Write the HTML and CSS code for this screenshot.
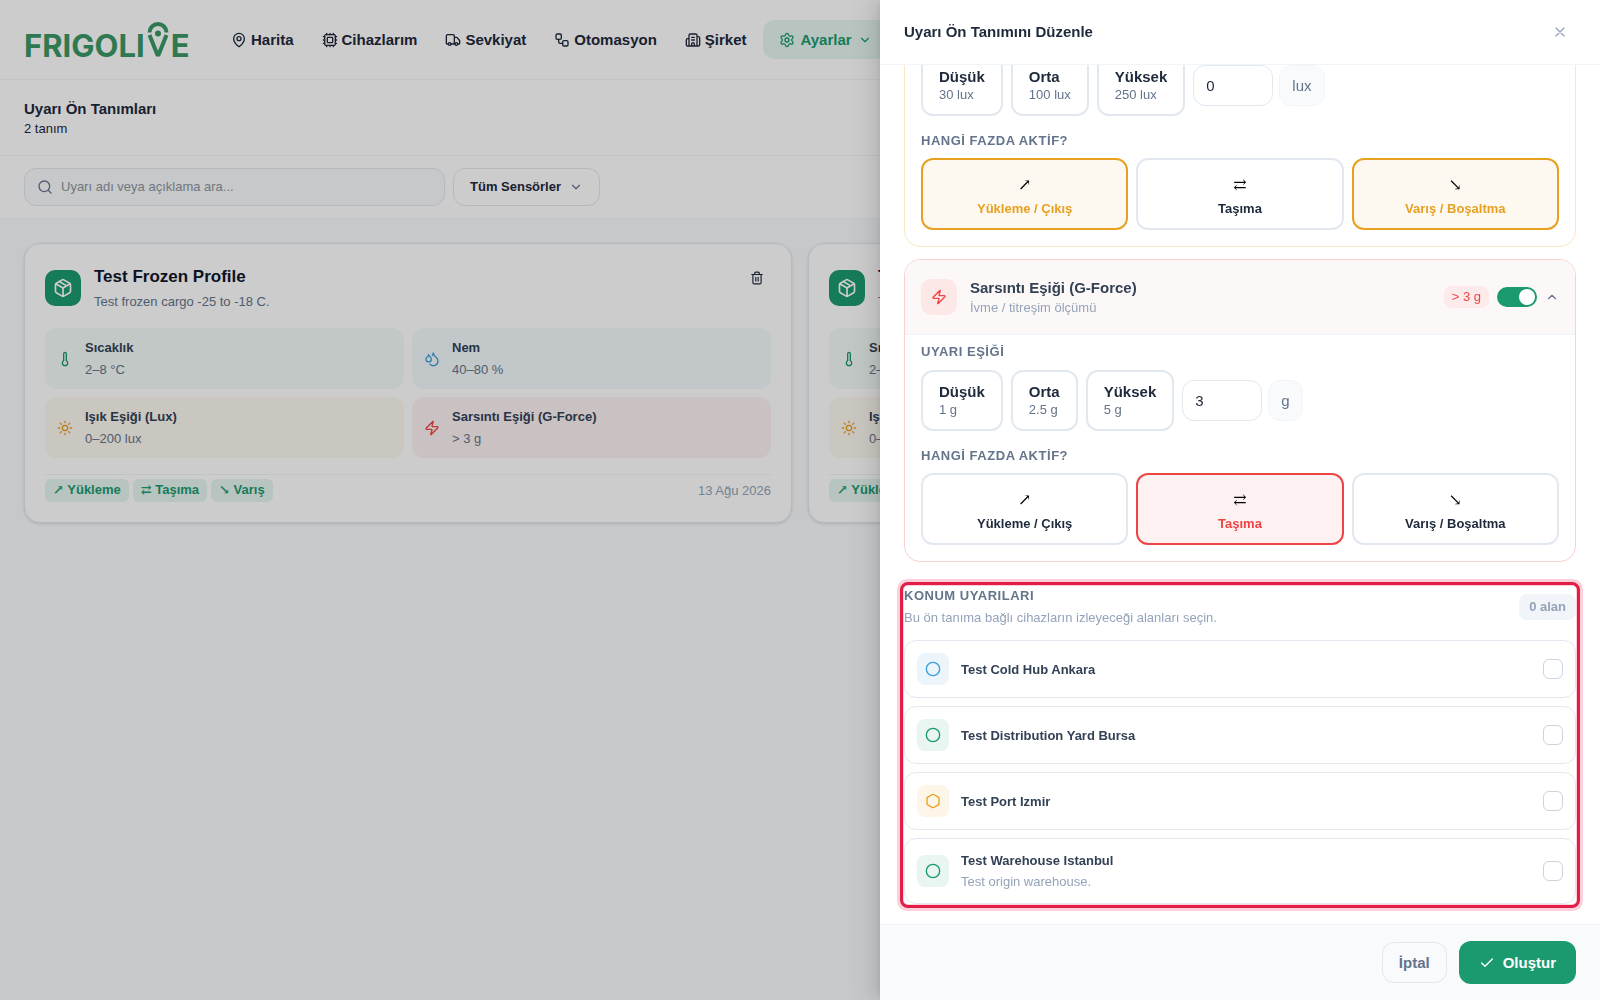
FILE: index.html
```html
<!DOCTYPE html>
<html lang="tr">
<head>
<meta charset="utf-8">
<meta name="viewport" content="width=device-width, initial-scale=1">
<title>Uyarı Ön Tanımları</title>
<link rel="stylesheet" href="styles.css">
</head>
<body>
<svg class="sprite" aria-hidden="true">
  <symbol id="pin" viewBox="0 0 24 24"><path d="M20 10c0 5-5.500 10.200-7.400 11.800a1 1 0 0 1-1.200 0C9.500 20.200 4 15 4 10a8 8 0 0 1 16 0"/><circle cx="12" cy="10" r="3"/></symbol>
  <symbol id="cpu" viewBox="0 0 24 24"><rect x="4" y="4" width="16" height="16" rx="2"/><rect x="8" y="8" width="8" height="8" rx="1"/><path d="M12 20v2M12 2v2M17 20v2M17 2v2M2 12h2M2 17h2M2 7h2M20 12h2M20 17h2M20 7h2M7 20v2M7 2v2"/></symbol>
  <symbol id="truck" viewBox="0 0 24 24"><path d="M14 18V6a2 2 0 0 0-2-2H4a2 2 0 0 0-2 2v11a1 1 0 0 0 1 1h2M15 18H9M19 18h2a1 1 0 0 0 1-1v-3.650a1 1 0 0 0-.22-.624l-3.480-4.350A1 1 0 0 0 17.520 8H14"/><circle cx="17" cy="18" r="2"/><circle cx="7" cy="18" r="2"/></symbol>
  <symbol id="flow" viewBox="0 0 24 24"><rect x="3" y="3" width="8" height="8" rx="2"/><path d="M7 11v4a2 2 0 0 0 2 2h4"/><rect x="13" y="13" width="8" height="8" rx="2"/></symbol>
  <symbol id="building" viewBox="0 0 24 24"><path d="M10 12h4M10 8h4M14 21v-3a2 2 0 0 0-4 0v3M6 10H4a2 2 0 0 0-2 2v7a2 2 0 0 0 2 2h16a2 2 0 0 0 2-2V9a2 2 0 0 0-2-2h-2M6 21V5a2 2 0 0 1 2-2h8a2 2 0 0 1 2 2v16"/></symbol>
  <symbol id="gear" viewBox="0 0 24 24"><path d="M9.671 4.136a2.340 2.340 0 0 1 4.659 0 2.340 2.340 0 0 0 3.319 1.915 2.340 2.340 0 0 1 2.330 4.033 2.340 2.340 0 0 0 0 3.831 2.340 2.340 0 0 1-2.330 4.033 2.340 2.340 0 0 0-3.319 1.915 2.340 2.340 0 0 1-4.659 0 2.340 2.340 0 0 0-3.320-1.915 2.340 2.340 0 0 1-2.330-4.033 2.340 2.340 0 0 0 0-3.831A2.340 2.340 0 0 1 6.350 6.051a2.340 2.340 0 0 0 3.319-1.915"/><circle cx="12" cy="12" r="3"/></symbol>
  <symbol id="down" viewBox="0 0 24 24"><path d="m6 9 6 6 6-6"/></symbol>
  <symbol id="up" viewBox="0 0 24 24"><path d="m18 15-6-6-6 6"/></symbol>
  <symbol id="search" viewBox="0 0 24 24"><circle cx="11" cy="11" r="8"/><path d="m21 21-4.340-4.340"/></symbol>
  <symbol id="box" viewBox="0 0 24 24"><path d="M11 21.730a2 2 0 0 0 2 0l7-4A2 2 0 0 0 21 16V8a2 2 0 0 0-1-1.730l-7-4a2 2 0 0 0-2 0l-7 4A2 2 0 0 0 3 8v8a2 2 0 0 0 1 1.730zM12 22V12"/><path d="M3.290 7 12 12l8.710-5M7.500 4.270l9 5.150"/></symbol>
  <symbol id="trash" viewBox="0 0 24 24"><path d="M3 6h18M19 6v14a2 2 0 0 1-2 2H7a2 2 0 0 1-2-2V6M8 6V4a2 2 0 0 1 2-2h4a2 2 0 0 1 2 2v2M10 11v6M14 11v6"/></symbol>
  <symbol id="thermo" viewBox="0 0 24 24"><path d="M14 4v10.540a4 4 0 1 1-4 0V4a2 2 0 0 1 4 0"/></symbol>
  <symbol id="drops" viewBox="0 0 24 24"><path d="M7 16.300c2.200 0 4-1.830 4-4.050 0-1.160-.57-2.260-1.710-3.190S7.290 6.750 7 5.300c-.29 1.450-1.140 2.840-2.290 3.760S3 11.100 3 12.250c0 2.220 1.800 4.050 4 4.050z"/><path d="M12.560 6.600A10.970 10.970 0 0 0 14 3.020c.5 2.500 2 4.900 4 6.500s3 3.500 3 5.500a6.980 6.980 0 0 1-11.910 4.970"/></symbol>
  <symbol id="sun" viewBox="0 0 24 24"><circle cx="12" cy="12" r="4"/><path d="M12 2v2M12 20v2M4.930 4.930l1.410 1.410M17.660 17.660l1.410 1.410M2 12h2M20 12h2M6.340 17.660l-1.410 1.410M19.070 4.930l-1.410 1.410"/></symbol>
  <symbol id="zap" viewBox="0 0 24 24"><path d="M4 14a1 1 0 0 1-.78-1.630l9.900-10.200a.5.5 0 0 1 .86.460l-1.920 6.020A1 1 0 0 0 13 10h7a1 1 0 0 1 .78 1.630l-9.900 10.200a.5.5 0 0 1-.86-.46l1.920-6.020A1 1 0 0 0 11 14z"/></symbol>
  <symbol id="close" viewBox="0 0 24 24"><path d="M18 6 6 18M6 6l12 12"/></symbol>
  <symbol id="circle" viewBox="0 0 24 24"><circle cx="12" cy="12" r="10"/></symbol>
  <symbol id="hexagon" viewBox="0 0 24 24"><path d="M21 16V8a2 2 0 0 0-1-1.730l-7-4a2 2 0 0 0-2 0l-7 4A2 2 0 0 0 3 8v8a2 2 0 0 0 1 1.730l7 4a2 2 0 0 0 2 0l7-4A2 2 0 0 0 21 16z"/></symbol>
  <symbol id="check" viewBox="0 0 24 24"><path d="M20 6 9 17l-5-5"/></symbol>
</svg>

<header class="topbar">
  <a class="logo" href="#" aria-label="Frigolive"><span>FRIGOLI</span><svg class="logo-pin" viewBox="0 0 22 35" aria-hidden="true"><path d="M2.500 10.500A8.500 8.500 0 0 1 19.500 10.500M2.500 13 10.300 32.500H11.700L19.500 13"/><circle cx="11" cy="11.500" r="3"/></svg><span>E</span></a>
  <nav class="nav">
    <a href="#"><svg class="icon"><use href="#pin"/></svg>Harita</a>
    <a href="#"><svg class="icon"><use href="#cpu"/></svg>Cihazlarım</a>
    <a href="#"><svg class="icon"><use href="#truck"/></svg>Sevkiyat</a>
    <a href="#"><svg class="icon"><use href="#flow"/></svg>Otomasyon</a>
    <a href="#"><svg class="icon"><use href="#building"/></svg>Şirket</a>
    <a href="#" class="active"><svg class="icon"><use href="#gear"/></svg>Ayarlar<svg class="icon small"><use href="#down"/></svg></a>
  </nav>
</header>

<section class="page-head">
  <h1>Uyarı Ön Tanımları</h1>
  <p>2 tanım</p>
</section>

<section class="filters">
  <label class="search"><svg class="icon"><use href="#search"/></svg><input type="search" placeholder="Uyarı adı veya açıklama ara..." aria-label="Uyarı ara"></label>
  <div class="select"><select aria-label="Sensör"><option>Tüm Sensörler</option></select><svg class="icon small"><use href="#down"/></svg></div>
</section>

<main class="cards">
  <article class="card">
    <div class="card-head">
      <span class="card-icon"><svg class="icon"><use href="#box"/></svg></span>
      <div class="card-title"><h2>Test Frozen Profile</h2><p>Test frozen cargo -25 to -18 C.</p></div>
      <button class="delete" aria-label="Sil"><svg class="icon"><use href="#trash"/></svg></button>
    </div>
    <div class="tiles">
      <div class="tile green"><svg class="icon"><use href="#thermo"/></svg><div><strong>Sıcaklık</strong><span>2–8 °C</span></div></div>
      <div class="tile blue"><svg class="icon"><use href="#drops"/></svg><div><strong>Nem</strong><span>40–80 %</span></div></div>
      <div class="tile amber"><svg class="icon"><use href="#sun"/></svg><div><strong>Işık Eşiği (Lux)</strong><span>0–200 lux</span></div></div>
      <div class="tile red"><svg class="icon"><use href="#zap"/></svg><div><strong>Sarsıntı Eşiği (G-Force)</strong><span>&gt; 3 g</span></div></div>
    </div>
    <div class="card-foot"><span class="chip">↗ Yükleme</span><span class="chip">⇄ Taşıma</span><span class="chip">↘ Varış</span><time datetime="2026-08-13">13 Ağu 2026</time></div>
  </article>
  <article class="card">
    <div class="card-head">
      <span class="card-icon"><svg class="icon"><use href="#box"/></svg></span>
      <div class="card-title"><h2>Test</h2><p>Test</p></div>
    </div>
    <div class="tiles">
      <div class="tile green"><svg class="icon"><use href="#thermo"/></svg><div><strong>Sıcaklık</strong><span>2–8 °C</span></div></div>
      <div class="tile blue"></div>
      <div class="tile amber"><svg class="icon"><use href="#sun"/></svg><div><strong>Işık</strong><span>0–200 lux</span></div></div>
      <div class="tile red"></div>
    </div>
    <div class="card-foot"><span class="chip">↗ Yükleme</span></div>
  </article>
</main>

<div class="mask"></div>

<aside class="drawer" role="dialog" aria-labelledby="drawer-title">
  <header class="drawer-head">
    <h2 id="drawer-title">Uyarı Ön Tanımını Düzenle</h2>
    <button class="close" aria-label="Kapat"><svg class="icon"><use href="#close"/></svg></button>
  </header>
  <div class="drawer-body">
    <div class="drawer-content">
      <section class="sensor lux">
        <div class="sensor-body">
          <div class="levels">
            <button class="level"><b>Düşük</b><span>30 lux</span></button>
            <button class="level"><b>Orta</b><span>100 lux</span></button>
            <button class="level"><b>Yüksek</b><span>250 lux</span></button>
            <div class="amount"><input type="text" inputmode="numeric" value="0" aria-label="Işık eşiği"><span class="unit">lux</span></div>
          </div>
          <h3 class="caption">HANGİ FAZDA AKTİF?</h3>
          <div class="phases">
            <button class="phase on"><i>↗</i><span>Yükleme / Çıkış</span></button>
            <button class="phase"><i>⇄</i><span>Taşıma</span></button>
            <button class="phase on"><i>↘</i><span>Varış / Boşaltma</span></button>
          </div>
        </div>
      </section>

      <section class="sensor shock">
        <div class="sensor-head">
          <span class="sensor-icon"><svg class="icon"><use href="#zap"/></svg></span>
          <div class="sensor-title"><h3>Sarsıntı Eşiği (G-Force)</h3><p>İvme / titreşim ölçümü</p></div>
          <span class="limit">&gt; 3 g</span>
          <input class="switch" type="checkbox" role="switch" checked aria-label="Sarsıntı eşiği etkin">
          <button class="fold" aria-label="Daralt"><svg class="icon small"><use href="#up"/></svg></button>
        </div>
        <div class="sensor-body">
          <h3 class="caption">UYARI EŞİĞİ</h3>
          <div class="levels">
            <button class="level"><b>Düşük</b><span>1 g</span></button>
            <button class="level"><b>Orta</b><span>2.5 g</span></button>
            <button class="level"><b>Yüksek</b><span>5 g</span></button>
            <div class="amount"><input type="text" inputmode="numeric" value="3" aria-label="Sarsıntı eşiği"><span class="unit">g</span></div>
          </div>
          <h3 class="caption">HANGİ FAZDA AKTİF?</h3>
          <div class="phases">
            <button class="phase"><i>↗</i><span>Yükleme / Çıkış</span></button>
            <button class="phase on"><i>⇄</i><span>Taşıma</span></button>
            <button class="phase"><i>↘</i><span>Varış / Boşaltma</span></button>
          </div>
        </div>
      </section>

      <section class="zones">
        <div class="zones-head">
          <div><h3 class="caption">KONUM UYARILARI</h3><p>Bu ön tanıma bağlı cihazların izleyeceği alanları seçin.</p></div>
          <span class="count">0 alan</span>
        </div>
        <label class="zone blue"><span class="zone-icon"><svg class="icon"><use href="#circle"/></svg></span><span class="zone-text"><strong>Test Cold Hub Ankara</strong></span><input type="checkbox"></label>
        <label class="zone green"><span class="zone-icon"><svg class="icon"><use href="#circle"/></svg></span><span class="zone-text"><strong>Test Distribution Yard Bursa</strong></span><input type="checkbox"></label>
        <label class="zone amber"><span class="zone-icon"><svg class="icon"><use href="#hexagon"/></svg></span><span class="zone-text"><strong>Test Port Izmir</strong></span><input type="checkbox"></label>
        <label class="zone green"><span class="zone-icon"><svg class="icon"><use href="#circle"/></svg></span><span class="zone-text"><strong>Test Warehouse Istanbul</strong><small>Test origin warehouse.</small></span><input type="checkbox"></label>
      </section>
    </div>
  </div>
  <footer class="drawer-foot">
    <button class="cancel">İptal</button>
    <button class="save"><svg class="icon"><use href="#check"/></svg>Oluştur</button>
  </footer>
</aside>
</body>
</html>
```
FILE: styles.css
```css
:root {
  --green: #1b9a70;
  --blue: #3b9fd8;
  --amber: #e8a020;
  --red: #ef4444;
  --ink: #0f172a;
  --slate: #1e293b;
  --text: #334155;
  --muted: #64748b;
  --faint: #94a3b8;
  --line: #e2e8f0;
  --hair: #f1f5f9;
  --soft: #f8fafc;
}

* { box-sizing: border-box; }

body {
  margin: 0;
  min-height: 100vh;
  overflow: hidden;
  background: var(--soft);
  color: var(--slate);
  font: 13px/20px "Liberation Sans", Arial, sans-serif;
}

h1, h2, h3, p { margin: 0; }
a { color: inherit; text-decoration: none; }
button, input, select { font: inherit; color: inherit; }
button { padding: 0; border: 0; background: none; }
.sprite { display: none; }

.icon {
  flex: none;
  width: 16px;
  height: 16px;
  fill: none;
  stroke: currentColor;
  stroke-width: 2;
  stroke-linecap: round;
  stroke-linejoin: round;
}
.icon.small { width: 14px; height: 14px; }

/* Top navigation */
.topbar {
  display: flex;
  align-items: center;
  gap: 28px;
  height: 80px;
  padding: 0 24px;
  background: #fff;
  border-bottom: 1px solid var(--hair);
  box-shadow: 0 1px 3px rgba(0, 0, 0, .06);
}
.logo {
  display: flex;
  align-items: baseline;
  gap: 2px;
  width: 167px;
  color: #3b9866;
  font: 700 31px/20px Inter, sans-serif;
}
.logo-pin {
  flex: none;
  width: 22px;
  height: 35px;
  fill: none;
  stroke: currentColor;
  stroke-width: 4;
}
.logo-pin circle { fill: currentColor; stroke: none; }
.nav { display: flex; gap: 4px; }
.nav a {
  display: flex;
  align-items: center;
  gap: 4px;
  padding: 8px 12px;
  border-radius: 12px;
  font-size: 15px;
  line-height: 23px;
  font-weight: 700;
}
.nav a.active {
  gap: 6px;
  padding: 8px 16px;
  background: #e6f6f0;
  color: var(--green);
}

.page-head {
  padding: 18px 24px 16px;
  background: #fff;
  border-bottom: 1px solid var(--hair);
}
.page-head h1 { font-size: 15px; line-height: 21px; }

.filters {
  display: flex;
  gap: 8px;
  padding: 12px 24px;
  background: #fff;
  border-bottom: 1px solid var(--hair);
}
.search {
  display: flex;
  align-items: center;
  gap: 8px;
  width: 421px;
  height: 38px;
  padding: 0 12px;
  border: 1px solid var(--line);
  border-radius: 12px;
  background: var(--soft);
  color: var(--muted);
}
.search input {
  flex: 1;
  min-width: 0;
  padding: 0;
  border: 0;
  background: none;
}
.search input::placeholder { color: #8e959f; opacity: 1; }
.select { display: grid; align-items: center; }
.select > * { grid-area: 1 / 1; }
.select select {
  width: 147px;
  height: 38px;
  padding: 0 16px;
  border: 1px solid var(--line);
  border-radius: 12px;
  appearance: none;
  background: #fff;
  font-weight: 700;
}
.select .icon { justify-self: end; margin-right: 17px; color: var(--muted); pointer-events: none; }

/* Definition cards */
.cards {
  display: grid;
  grid-template-columns: 1fr 1fr;
  gap: 16px;
  padding: 24px;
}
.card {
  padding: 20px;
  border: 1px solid var(--line);
  border-radius: 16px;
  background: #fff;
  box-shadow: 0 1px 3px rgba(15, 23, 42, .12);
}
.card-head { display: flex; gap: 13px; align-items: center; margin-bottom: 16px; }
.card-icon {
  display: grid;
  place-items: center;
  width: 36px;
  height: 36px;
  border-radius: 10px;
  background: var(--green);
  color: #fff;
}
.card-icon .icon { width: 20px; height: 20px; }
.card-title { flex: 1; }
.card-title h2 { font-size: 17px; line-height: 26px; color: var(--ink); }
.card-title p { padding-top: 2px; line-height: 20px; color: var(--muted); }
.delete { align-self: flex-start; padding: 7px; color: var(--slate); }
.delete .icon { width: 14px; height: 14px; display: block; }

.tiles { display: grid; grid-template-columns: 1fr 1fr; gap: 8px; }
.tile {
  display: flex;
  align-items: center;
  gap: 12px;
  height: 61px;
  padding: 0 12px;
  border-radius: 12px;
}
.tile strong, .tile span { display: block; line-height: 22px; }
.tile strong { color: var(--text); }
.tile span { color: var(--muted); }
.tile.green { background: #f2faf7; }
.tile.blue { background: #f3f9fd; }
.tile.amber { background: #fdf8f0; }
.tile.red { background: #fdf3f3; }
.green .icon { color: var(--green); }
.blue .icon { color: var(--blue); }
.amber .icon { color: var(--amber); }
.red .icon { color: var(--red); }

.card-foot {
  display: flex;
  align-items: center;
  gap: 4px;
  margin-top: 16px;
  padding-top: 4px;
  border-top: 1px solid var(--hair);
}
.chip {
  height: 23px;
  padding: 0 8px;
  border-radius: 6px;
  background: #e6f6f0;
  color: var(--green);
  font-family: "Liberation Sans", "DejaVu Serif", sans-serif;
  font-weight: 700;
  line-height: 21px;
}
.card-foot time { margin-left: auto; color: var(--faint); }

/* Drawer */
.mask { position: fixed; inset: 0; background: rgba(0, 0, 0, .2); }
.drawer {
  position: fixed;
  inset: 0 0 0 auto;
  display: flex;
  flex-direction: column;
  width: 45%;
  background: #fff;
  box-shadow: -6px 0 16px rgba(0, 0, 0, .08), -3px 0 6px -4px rgba(0, 0, 0, .12), -9px 0 28px 8px rgba(0, 0, 0, .05);
}
.drawer-head {
  display: flex;
  align-items: center;
  justify-content: space-between;
  height: 65px;
  padding: 0 24px;
  border-bottom: 1px solid var(--hair);
  color: var(--slate);
}
.drawer-head h2 { font-size: 15px; line-height: 22px; }
.close { padding: 8px; color: var(--faint); }
.close .icon { display: block; }

/* Reversed column opens the panel scrolled to its end */
.drawer-body {
  flex: 1;
  min-height: 0;
  display: flex;
  flex-direction: column-reverse;
  overflow-y: auto;
  scrollbar-width: none;
}
.drawer-content { padding: 20px 24px; }

.sensor {
  margin-bottom: 12px;
  border: 1px solid var(--line);
  border-radius: 16px;
  overflow: hidden;
}
.lux { border-color: #fbe7c3; --tone: var(--amber); --tint: #fdf8f0; }
.shock { border-color: #fbd0d0; --tone: var(--red); --tint: #fef1f1; margin-bottom: 24px; }
.sensor-head {
  display: flex;
  align-items: center;
  gap: 8px;
  height: 75px;
  padding: 0 16px;
  border-bottom: 1px solid var(--hair);
  background: #fdf8f8;
}
.sensor-icon {
  display: grid;
  place-items: center;
  width: 36px;
  height: 36px;
  border-radius: 10px;
  background: #fde8e8;
  color: var(--red);
}
.sensor-title { flex: 1; padding-left: 5px; }
.sensor-title h3 { font-size: 15px; line-height: 20px; color: var(--text); }
.sensor-title p { padding-top: 1px; line-height: 18px; color: var(--faint); }
.limit {
  padding: 0 8px;
  border-radius: 8px;
  background: #fdeaea;
  color: var(--red);
  line-height: 22px;
}
.switch {
  appearance: none;
  display: flex;
  justify-content: flex-end;
  width: 40px;
  height: 20px;
  margin: 0;
  padding: 2px;
  border-radius: 10px;
  background: var(--green);
}
.switch::before {
  content: "";
  width: 16px;
  height: 16px;
  border-radius: 8px;
  background: #fff;
}
.fold { color: var(--muted); }
.fold .icon { display: block; }

.sensor-body { padding: 7px 16px 16px; }
.caption {
  font-size: 13px;
  line-height: 20px;
  letter-spacing: .04em;
  color: var(--muted);
}
.levels { display: flex; align-items: center; gap: 8px; margin: 8px 0 15px; }
.level {
  height: 61px;
  padding: 0 16px;
  border: 2px solid var(--line);
  border-radius: 12px;
  background: #fff;
  text-align: left;
}
.level b, .level span { display: block; line-height: 18px; }
.level b { font-size: 15px; color: var(--slate); }
.level span { color: var(--muted); }
.amount { display: flex; gap: 6px; font-size: 15px; }
.amount input, .unit {
  height: 41px;
  padding: 0 12px;
  border: 1px solid var(--line);
  border-radius: 12px;
}
.amount input { width: 80px; background: #fff; color: var(--slate); }
.unit { border-color: var(--hair); background: var(--soft); color: var(--muted); line-height: 40px; }

.phases { display: grid; grid-template-columns: repeat(3, 1fr); gap: 8px; margin-top: 7px; }
.phase {
  display: flex;
  flex-direction: column;
  align-items: center;
  justify-content: center;
  gap: 4px;
  height: 72px;
  padding-top: 6px;
  border: 2px solid var(--line);
  border-radius: 12px;
  background: #fff;
  color: var(--slate);
  font-weight: 700;
}
.phase i {
  font: 16px/20px "DejaVu Serif", serif;
  color: #000;
}
.phase.on { border-color: var(--tone); background: var(--tint); color: var(--tone); }

/* Zone picker */
.zones {
  display: grid;
  gap: 8px;
  border-radius: 4px;
  outline: 3px solid #e11d48;
  outline-offset: 1px;
  box-shadow: 0 0 0 7px #fbd0da;
  background: #fff;
}
.zones-head {
  display: flex;
  align-items: center;
  justify-content: space-between;
  height: 46px;
  padding-bottom: 4px;
}
.zones-head p { padding-top: 2px; color: var(--faint); }
.count {
  padding: 0 10px;
  border-radius: 8px;
  background: var(--hair);
  color: var(--faint);
  font-weight: 700;
  line-height: 26px;
}
.zone {
  display: flex;
  align-items: center;
  gap: 12px;
  min-height: 58px;
  padding: 11px 12px;
  border: 1px solid var(--line);
  border-radius: 12px;
}
.zone-icon {
  display: grid;
  place-items: center;
  width: 32px;
  height: 32px;
  border-radius: 8px;
}
.zone.blue .zone-icon { background: #ebf5fb; }
.zone.green .zone-icon { background: #e8f5f0; }
.zone.amber .zone-icon { background: #fdf5e8; }
.zone-text { flex: 1; }
.zone-text strong, .zone-text small { display: block; line-height: 21px; }
.zone-text strong { color: var(--text); }
.zone-text small { font-size: 13px; color: var(--faint); }
.zone input {
  appearance: none;
  width: 20px;
  height: 20px;
  margin: 0;
  border: 1px solid #cbd5e1;
  border-radius: 6px;
  background: #fff;
}

.drawer-foot {
  display: flex;
  align-items: center;
  justify-content: flex-end;
  gap: 12px;
  height: 76px;
  padding: 0 24px;
  border-top: 1px solid var(--hair);
  background: var(--soft);
  font-size: 15px;
  font-weight: 700;
}
.cancel {
  height: 41px;
  padding: 0 16px;
  border: 1px solid var(--line);
  border-radius: 12px;
  color: var(--muted);
}
.save {
  display: flex;
  align-items: center;
  gap: 8px;
  height: 43px;
  padding: 0 20px;
  border-radius: 12px;
  background: var(--green);
  color: #fff;
}
```
